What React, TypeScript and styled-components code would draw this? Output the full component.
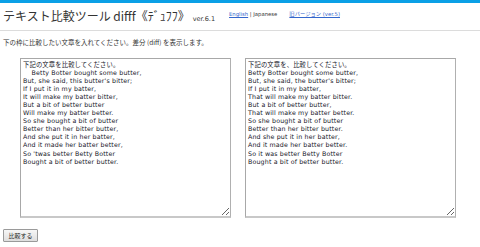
import React from "react";
import styled, { createGlobalStyle } from "styled-components";

const Global = createGlobalStyle`
  html, body { margin: 0; padding: 0; background: #fff; }
  body {
    font-family: "DejaVu Sans", "Noto Sans CJK JP", sans-serif;
    color: #333;
  }
`;

const TopBar = styled.div`
  height: 3px;
  background: #0aa0e6;
`;

const Header = styled.header`
  display: flex;
  align-items: flex-start;
  height: 28px;
  padding: 5px 3px 0;
  box-sizing: border-box;
  border-bottom: 1px solid #dcdcdc;
`;

const Title = styled.h1`
  margin: 0;
  font-family: "Noto Sans CJK JP", sans-serif;
  font-weight: normal;
  font-size: 12px;
  line-height: 16px;
  color: #333;
  white-space: nowrap;
`;

const Version = styled.span`
  font-family: "DejaVu Sans", sans-serif;
  font-size: 6.5px;
  margin-left: 3px;
`;

const Nav = styled.nav`
  display: flex;
  gap: 12px;
  margin-left: 14px;
  padding-top: 3px;
  font-size: 5.3px;
  line-height: 7px;
  color: #333;
  white-space: nowrap;
`;

const Link = styled.a`
  color: #3366cc;
  text-decoration: underline;
`;

const Intro = styled.p`
  margin: 7px 0 0 3px;
  font-family: "Noto Sans CJK JP", sans-serif;
  font-size: 6.5px;
  line-height: 9px;
  color: #333;
`;

const Panels = styled.div`
  display: flex;
  gap: 14px;
  padding: 11px 0 0 20px;
`;

const Box = styled.textarea`
  width: 211px;
  height: 160px;
  box-sizing: border-box;
  margin: 0;
  padding: 2px 2px;
  border: 1px solid #a8a8a8;
  border-bottom: 2px solid #c8c8c8;
  border-right: 1px solid #b0b0b0;
  font-family: "DejaVu Sans", "Noto Sans CJK JP", sans-serif;
  font-size: 6.3px;
  letter-spacing: 0.15px;
  line-height: 8.05px;
  color: #15151f;
  background: #fff;
  outline: none;
  overflow: hidden;
`;

const Footer = styled.div`
  display: flex;
  padding: 11px 0 0 3px;
`;

const Button = styled.button`
  margin: 0;
  width: 35px;
  height: 13px;
  padding: 0;
  font-family: "Noto Sans CJK JP", sans-serif;
  font-size: 6px;
  line-height: 10px;
  color: #222;
  background: linear-gradient(#f6f6f6, #dedede);
  border: 1px solid #9a9a9a;
  border-radius: 1px;
`;

const left = `下記の文章を比較してください。
    Betty Botter bought some butter,
But, she said, this butter's bitter;
If I put it in my batter,
It will make my batter bitter,
But a bit of better butter
Will make my batter better.
So she bought a bit of butter
Better than her bitter butter,
And she put it in her batter,
And it made her batter better,
So 'twas better Betty Botter
Bought a bit of better butter.`;

const right = `下記の文章を、比較してください。
Betty Botter bought some butter,
But, she said, the butter's bitter;
If I put it in my batter,
That will make my batter bitter.
But a bit of better butter,
That will make my batter better.
So she bought a bit of butter
Better than her bitter butter.
And she put it in her batter,
And it made her batter better.
So it was better Betty Botter
Bought a bit of better butter.`;

export default function App() {
  return (
    <>
      <Global />
      <TopBar />
      <Header>
        <Title>
          テキスト比較ツール difff《ﾃﾞｭﾌﾌ》<Version>ver.6.1</Version>
        </Title>
        <Nav>
          <span>
            <Link href="#">English</Link> | Japanese
          </span>
          <Link href="#">旧バージョン (ver.5)</Link>
        </Nav>
      </Header>
      <Intro>下の枠に比較したい文章を入れてください。差分 (diff) を表示します。</Intro>
      <Panels>
        <Box defaultValue={left} spellCheck={false} />
        <Box defaultValue={right} spellCheck={false} />
      </Panels>
      <Footer>
        <Button>比較する</Button>
      </Footer>
    </>
  );
}
